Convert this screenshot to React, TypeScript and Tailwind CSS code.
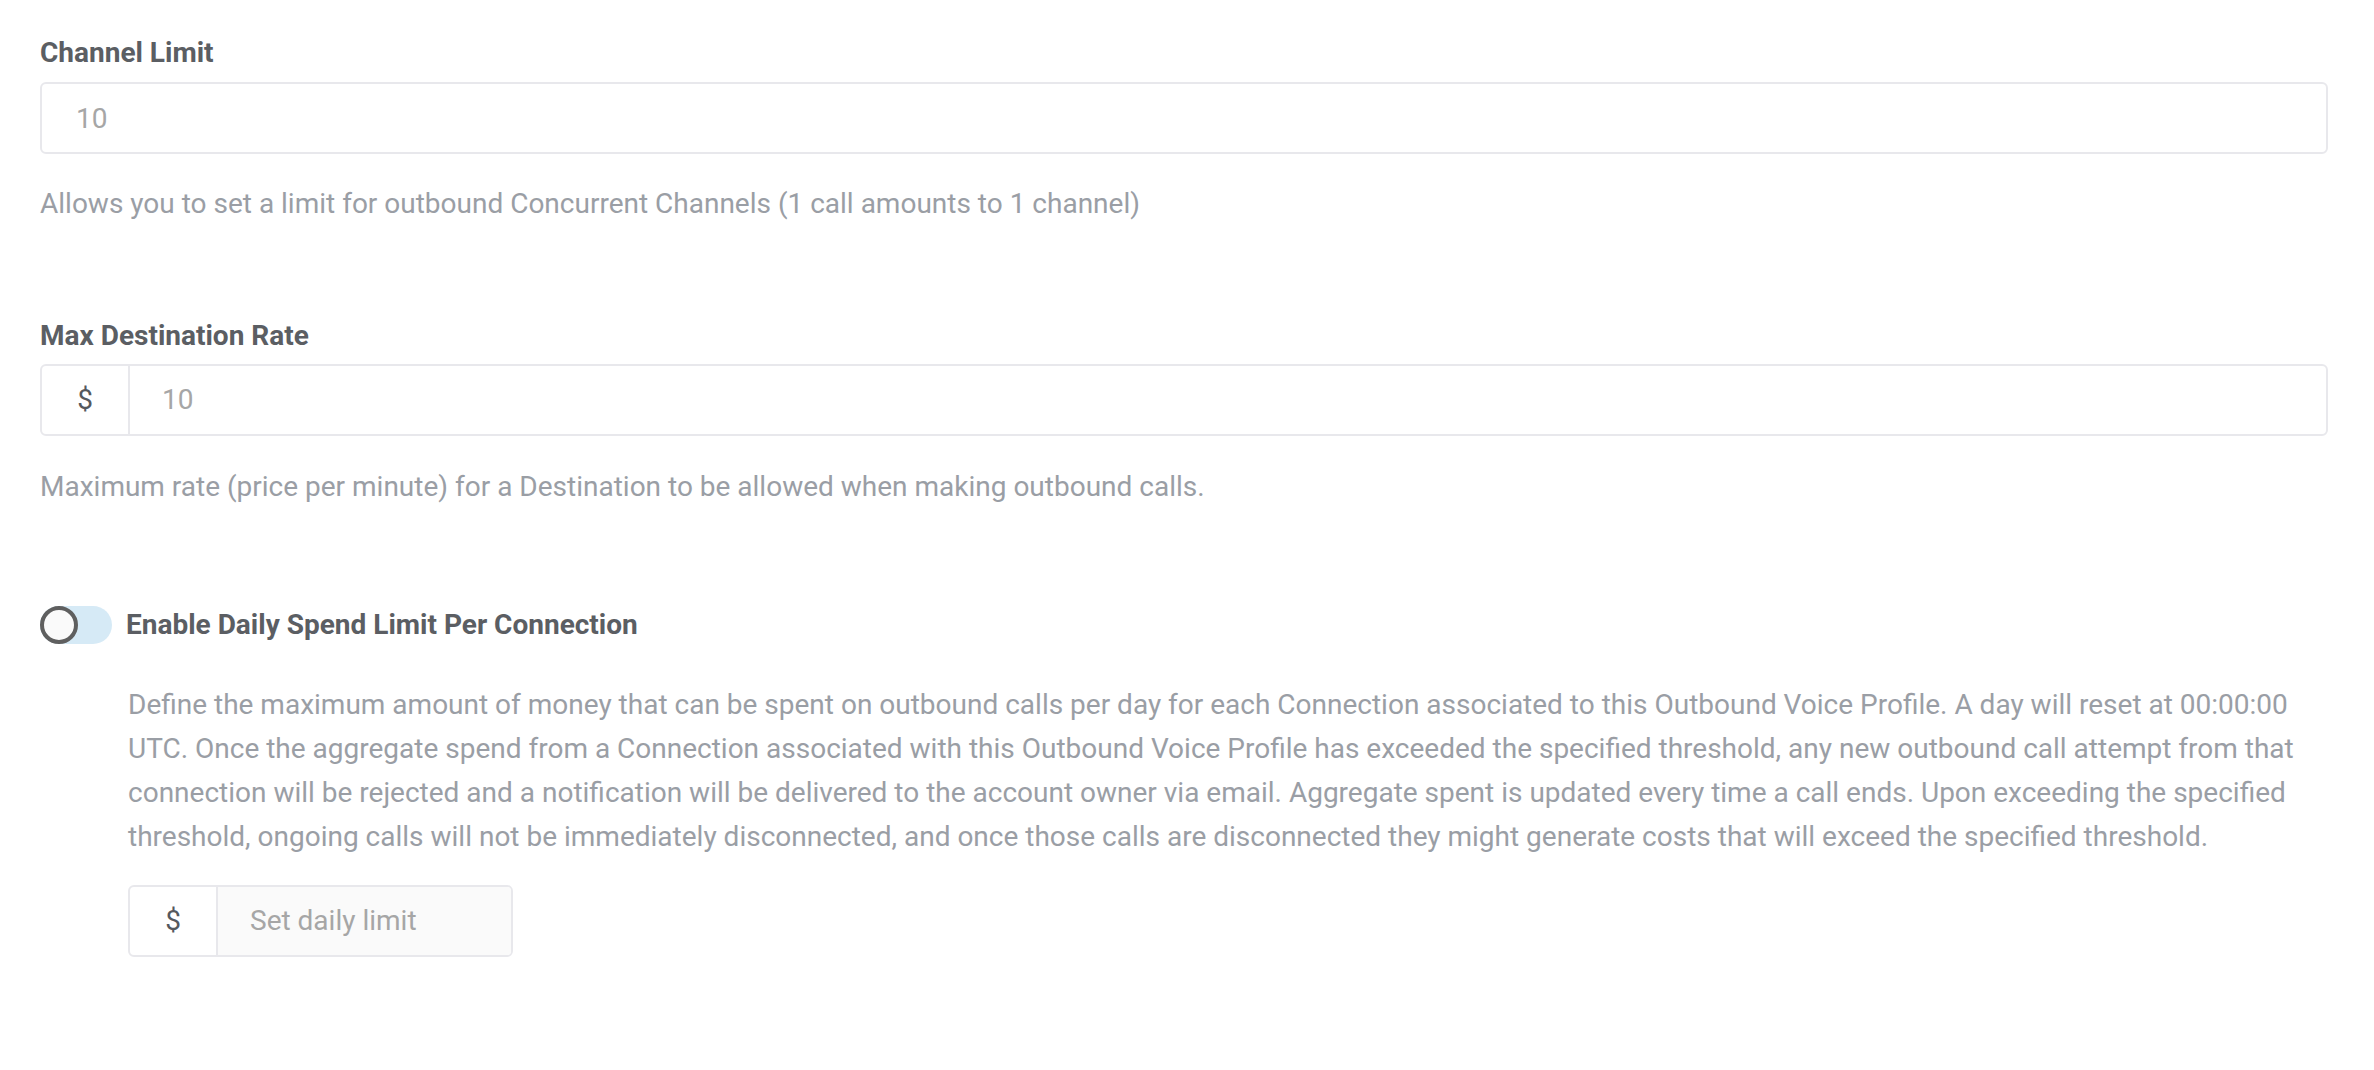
import { useState } from 'react';

function Label({ children }: { children: React.ReactNode }) {
  return <label className="block text-[28px] leading-[32px] font-bold text-[#5b5e63]">{children}</label>;
}

function Helper({ children }: { children: React.ReactNode }) {
  return <p className="text-[28px] leading-[36px] text-[#9a9ea5]">{children}</p>;
}

function DollarAddon() {
  return (
    <span className="flex w-[88px] shrink-0 items-center justify-center border-r-2 border-[#e8e8ec] text-[28px] text-[#55595e]">
      $
    </span>
  );
}

export default function App() {
  const [enabled, setEnabled] = useState(false);

  return (
    <div className="min-h-screen bg-white pl-[40px] pr-[46px] pt-[37px] font-['Roboto','Liberation_Sans',sans-serif]">
      {/* Channel limit */}
      <section>
        <Label>Channel Limit</Label>
        <input
          className="mt-[13px] block h-[72px] w-full rounded-[6px] border-2 border-[#e8e8ec] px-[34px] text-[28px] text-[#555] outline-none placeholder:text-[#a6a6a6]"
          placeholder="10"
        />
        <div className="mt-[32px]">
          <Helper>Allows you to set a limit for outbound Concurrent Channels (1 call amounts to 1 channel)</Helper>
        </div>
      </section>

      {/* Max destination rate */}
      <section className="mt-[98px]">
        <Label>Max Destination Rate</Label>
        <div className="mt-[12px] flex h-[72px] w-full overflow-hidden rounded-[6px] border-2 border-[#e8e8ec]">
          <DollarAddon />
          <input
            className="flex-1 px-[32px] text-[28px] text-[#555] outline-none placeholder:text-[#a6a6a6]"
            placeholder="10"
          />
        </div>
        <div className="mt-[33px]">
          <Helper>Maximum rate (price per minute) for a Destination to be allowed when making outbound calls.</Helper>
        </div>
      </section>

      {/* Daily spend limit */}
      <section className="mt-[101px]">
        <div className="flex items-center gap-[14px]">
          <button
            onClick={() => setEnabled(!enabled)}
            className="relative h-[38px] w-[72px] shrink-0 rounded-full bg-[#d6eaf6]"
          >
            <span
              className={
                enabled
                  ? 'absolute left-[34px] top-0 h-[38px] w-[38px] rounded-full border-[4px] border-[#2a7de1] bg-white'
                  : 'absolute left-0 top-0 h-[38px] w-[38px] rounded-full border-[4px] border-[#5f5f5f] bg-[#fafafa]'
              }
            />
          </button>
          <span className="text-[28px] leading-[32px] font-bold text-[#5b5e63]">Enable Daily Spend Limit Per Connection</span>
        </div>

        <div className="pl-[88px]">
          <p className="mt-[39px] text-[28px] leading-[44px] text-[#9a9ea5]">
            Define the maximum amount of money that can be spent on outbound calls per day for each Connection associated to
            this Outbound Voice Profile. A day will reset at 00:00:00 UTC. Once the aggregate spend from a Connection
            associated with this Outbound Voice Profile has exceeded the specified threshold, any new outbound call attempt
            from that connection will be rejected and a notification will be delivered to the account owner via email.
            Aggregate spent is updated every time a call ends. Upon exceeding the specified threshold, ongoing calls will not
            be immediately disconnected, and once those calls are disconnected they might generate costs that will exceed the
            specified threshold.
          </p>
          <div className="mt-[26px] flex h-[72px] w-[385px] overflow-hidden rounded-[6px] border-2 border-[#e8e8ec]">
            <DollarAddon />
            <input
              className="w-full min-w-0 flex-1 bg-[#fafafa] px-[32px] text-[28px] text-[#555] outline-none placeholder:text-[#a6a6a6]"
              placeholder="Set daily limit"
            />
          </div>
        </div>
      </section>
    </div>
  );
}
